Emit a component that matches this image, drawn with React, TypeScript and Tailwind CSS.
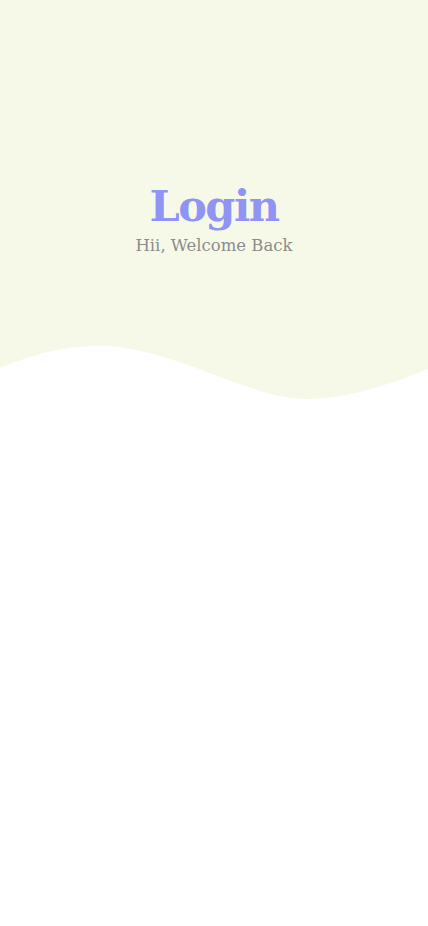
import React from 'react';

const Wave = () => (
  <svg viewBox="0 0 428 64" className="block w-full h-[64px]" preserveAspectRatio="none">
    <path
      d="M0,0 H428 V29 C380,49 340,59 305,59 C250,59 170,6 100,6 C60,6 30,16 0,28 Z"
      fill="#f7f9e8"
    />
  </svg>
);

const App: React.FC = () => {
  return (
    <div className="min-h-screen w-full bg-white font-['DejaVu_Serif',serif]">
      {/* Header */}
      <div className="bg-[#f7f9e8] h-[340px] flex flex-col items-center pt-[181px]">
        <h1 className="text-[43px] leading-[50px] font-bold text-[#8f94f5] tracking-[-1.5px]">Login</h1>
        <p className="text-[16.5px] leading-[24px] text-[#8c8c8c] mt-[3px]">Hii, Welcome Back</p>
      </div>
      <Wave />
    </div>
  );
};

export default App;
